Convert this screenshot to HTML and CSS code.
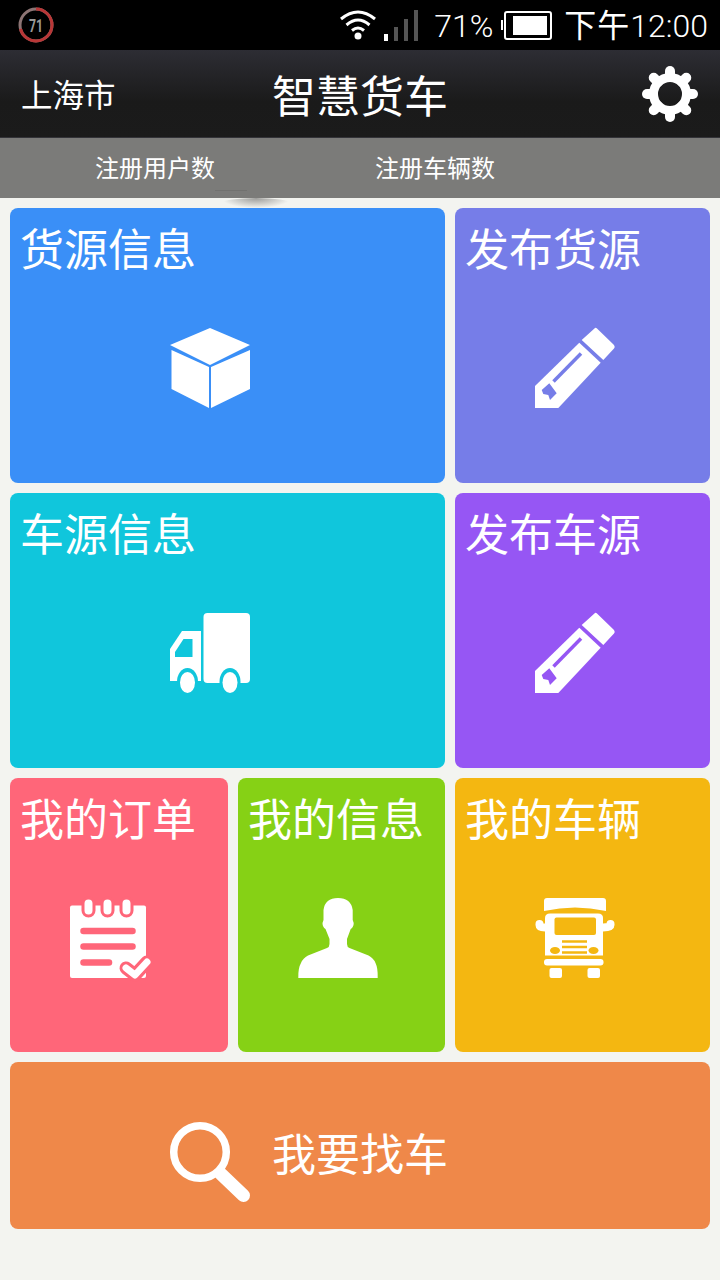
FILE: index.html
```html
<!DOCTYPE html>
<html lang="zh-CN">
<head>
  <meta charset="UTF-8" />
  <meta name="viewport" content="width=device-width, initial-scale=1.0"/>
  <title>智慧货车</title>
  <link rel="stylesheet" href="styles.css">
</head>
<body>

<!-- Status bar -->
<div class="status-bar">
  <svg class="speed-ring" width="36" height="36" viewBox="0 0 36 36">
    <circle cx="18" cy="18" r="16" fill="none" stroke="#8c7474" stroke-width="3"/>
    <circle cx="18" cy="18" r="16" fill="none" stroke="#b93737" stroke-width="3" pathLength="100" stroke-dasharray="71 100" transform="rotate(-90 18 18)"/>
    <text x="18" y="24.500" text-anchor="middle" textLength="14" lengthAdjust="spacingAndGlyphs" class="speed-text">71</text>
  </svg>
  <div class="status-right">
    <svg class="wifi" width="38" height="32" viewBox="0 0 38 32">
      <path d="M2 10 Q19 -4 36 10" fill="none" stroke="#fff" stroke-width="3"/>
      <path d="M7.5 16 Q19 6 30.5 16" fill="none" stroke="#fff" stroke-width="3"/>
      <path d="M13 21.5 Q19 16.5 25 21.5" fill="none" stroke="#fff" stroke-width="3"/>
      <circle cx="19" cy="27" r="3.5" fill="#fff"/>
    </svg>
    <div class="signal">
      <span class="bar bar-1"></span>
      <span class="bar bar-2"></span>
      <span class="bar bar-3"></span>
      <span class="bar bar-4"></span>
    </div>
    <span class="battery-text">71%</span>
    <div class="battery">
      <span class="battery-nub"></span>
      <span class="battery-body"><span class="battery-fill"></span></span>
    </div>
    <span class="clock"><span class="clock-ampm">下午</span>12:00</span>
  </div>
</div>

<!-- Header -->
<div class="app-header">
  <div class="city">上海市</div>
  <div class="app-title">智慧货车</div>
  <div class="settings">
    <svg width="58" height="58" viewBox="0 0 58 58">
      <circle cx="29" cy="29" r="16.5" fill="none" stroke="#fff" stroke-width="9"/>
      <g stroke="#fff" stroke-width="10" stroke-linecap="round">
        <line x1="29" y1="12" x2="29" y2="6"/>
        <line x1="29" y1="12" x2="29" y2="6" transform="rotate(45 29 29)"/>
        <line x1="29" y1="12" x2="29" y2="6" transform="rotate(90 29 29)"/>
        <line x1="29" y1="12" x2="29" y2="6" transform="rotate(135 29 29)"/>
        <line x1="29" y1="12" x2="29" y2="6" transform="rotate(180 29 29)"/>
        <line x1="29" y1="12" x2="29" y2="6" transform="rotate(225 29 29)"/>
        <line x1="29" y1="12" x2="29" y2="6" transform="rotate(270 29 29)"/>
        <line x1="29" y1="12" x2="29" y2="6" transform="rotate(315 29 29)"/>
      </g>
    </svg>
  </div>
</div>

<!-- Counters -->
<div class="summary">
  <span>注册用户数</span>
  <span>注册车辆数</span>
  <i class="marquee-shadow"></i>
</div>

<!-- Menu tiles -->
<div class="menu-grid">
  <div class="tile tile-wide blue">
    <h3>货源信息</h3>
    <svg class="icon icon-wide" viewBox="0 0 80 80">
      <path d="M40 0 L80 17 L40 37 L0 17 Z M1.5 22 L39 39 V80 L1.5 61 Z M41 39 L80 22 V61 L41 80 Z" fill="#fff"/>
    </svg>
  </div>

  <div class="tile periwinkle">
    <h3>发布货源</h3>
    <svg class="icon icon-side" viewBox="0 0 80 80">
      <use href="#pencil"/>
    </svg>
  </div>

  <div class="tile tile-wide cyan">
    <h3>车源信息</h3>
    <svg class="icon icon-wide" viewBox="0 0 80 80">
      <rect x="33.5" y="0" width="46.5" height="70" rx="4" fill="#fff"/>
      <path d="M0 36 L12 18 H31 V68 H0 Z" fill="#fff"/>
      <path d="M13.5 26 H22.5 V44 H5 V39 Z" fill="#10c6dc"/>
      <ellipse cx="17.5" cy="69" rx="10.5" ry="14" fill="#10c6dc"/>
      <ellipse cx="60" cy="69" rx="10.5" ry="14" fill="#10c6dc"/>
      <ellipse cx="17.5" cy="69.5" rx="7.5" ry="10.5" fill="#fff"/>
      <ellipse cx="60" cy="69.5" rx="7.5" ry="10.5" fill="#fff"/>
    </svg>
  </div>

  <div class="tile purple">
    <h3>发布车源</h3>
    <svg class="icon icon-side" viewBox="0 0 80 80">
      <use href="#pencil"/>
    </svg>
  </div>

  <div class="tile pink">
    <h3>我的订单</h3>
    <svg class="icon icon-small" viewBox="0 0 80 80">
      <rect x="0" y="7.500" width="76" height="72.500" rx="2" fill="#fff"/>
      <g fill="#fff" stroke="#ff6679" stroke-width="3">
        <rect x="13" y="0" width="11" height="18" rx="5.500"/>
        <rect x="32" y="0" width="11" height="18" rx="5.500"/>
        <rect x="51" y="0" width="11" height="18" rx="5.500"/>
      </g>
      <g fill="none" stroke="#ff6679" stroke-width="6.500" stroke-linecap="round">
        <path d="M13.500 33 H62.500"/>
        <path d="M13.500 48.500 H62.500"/>
        <path d="M13.500 64.500 H39"/>
      </g>
      <path d="M56 70 L65 77 L77 64" fill="none" stroke="#ff6679" stroke-width="13" stroke-linecap="round" stroke-linejoin="round"/>
      <path d="M56 70 L65 77 L77 64" fill="none" stroke="#fff" stroke-width="7" stroke-linecap="round" stroke-linejoin="round"/>
    </svg>
  </div>

  <div class="tile green">
    <h3>我的信息</h3>
    <svg class="icon icon-small" viewBox="0 0 80 80">
      <path d="M0.300 80 Q0 70 3 65 Q5 60 10 57.500 L29 50 Q31.500 49 31.500 46 V41 L27.500 31 Q24.500 29 24.500 25 L25.500 22 V12 Q27 0 40 0 Q53 0 54.700 12 V22 L55.700 25 Q55.700 29 52.700 31 L49 41 V46 Q49 49 51.500 50 L70.500 57.500 Q75.500 60 77.500 65 Q80 70 79.700 80 Z" fill="#fff"/>
    </svg>
  </div>

  <div class="tile amber">
    <h3>我的车辆</h3>
    <svg class="icon icon-side" viewBox="0 0 80 80">
      <path d="M9 13 V3 Q9 0 12 0 H68 Q71 0 71 3 V13 Q40 6 9 13 Z" fill="#fff"/>
      <path d="M10 20 Q10 15.500 15 15.500 H63 Q68 15.500 68 20 V57.500 H10 Z" fill="#fff"/>
      <rect x="19.500" y="19.500" width="41.500" height="17.500" rx="2" fill="#f4b711"/>
      <g fill="none" stroke="#f4b711" stroke-width="2.500">
        <path d="M27 43.500 H52"/>
        <path d="M27 49 H52"/>
        <path d="M27 54.500 H52"/>
      </g>
      <ellipse cx="20" cy="52.500" rx="5" ry="3.500" fill="#f4b711"/>
      <ellipse cx="58.500" cy="52.500" rx="5" ry="3.500" fill="#f4b711"/>
      <path d="M4.500 26 V27 Q4.500 29.500 10 29.500 M75.500 26 V27 Q75.500 29.500 68 29.500" fill="none" stroke="#fff" stroke-width="8" stroke-linecap="round"/>
      <rect x="9" y="61" width="59.500" height="6.500" rx="3" fill="#fff"/>
      <rect x="14.500" y="70" width="12.500" height="10" rx="2" fill="#fff"/>
      <rect x="52.500" y="70" width="12.500" height="10" rx="2" fill="#fff"/>
    </svg>
  </div>

  <div class="tile tile-search orange">
    <svg class="icon" viewBox="0 0 80 80">
      <circle cx="30" cy="30" r="26.300" fill="none" stroke="#fff" stroke-width="7.500"/>
      <path d="M51 52 L73.500 73.500" fill="none" stroke="#fff" stroke-width="13" stroke-linecap="round"/>
    </svg>
    <h3>我要找车</h3>
  </div>
</div>

<!-- Shared pencil shape, both publish tiles use it -->
<svg class="defs" width="0" height="0">
  <defs>
    <g id="pencil">
      <path d="M46.700 12 L60 0 Q61 -0.500 62 0.500 L79 17 Q80.500 19 79 20.500 L68.300 32 Z" fill="#fff"/>
      <path d="M44.300 14.700 L65.700 34.700 L23.300 80 H0 V58 Z" fill="#fff"/>
      <path d="M46 25.500 L18.500 53.500" fill="none" stroke="currentColor" stroke-width="3.500"/>
      <path d="M6.700 62 L14.300 55.300 L21.700 65.300 L15 72 L13.300 67 L8.300 66 Z" fill="currentColor"/>
    </g>
  </defs>
</svg>

</body>
</html>
```

FILE: styles.css
```css
* {
  box-sizing: border-box;
}

body {
  margin: 0;
  background: #f3f4f0;
  font-family: "Noto Sans CJK SC", "Noto Sans", sans-serif;
  color: #fff;
}

/* status bar */
.status-bar {
  display: flex;
  align-items: center;
  justify-content: space-between;
  height: 50px;
  padding: 0 12px 0 18px;
  background: #000;
}

.speed-text {
  font-family: Roboto, sans-serif;
  font-size: 19px;
  font-weight: 700;
  fill: #999;
}

.status-right {
  display: flex;
  align-items: center;
}

.wifi {
  margin: 0 7px 0 0;
}

.signal {
  display: flex;
  align-items: flex-end;
  gap: 6px;
  height: 31px;
  margin: 0 16px 0 0;
}

.bar {
  width: 4px;
  background: #555;
}

.bar-1 { height: 7px; background: #fff; }
.bar-2 { height: 14px; }
.bar-3 { height: 22px; }
.bar-4 { height: 31px; }

.battery-text {
  width: 67px;
  margin-top: 2px;
  font-family: Roboto, sans-serif;
  font-size: 32px;
  font-weight: 300;
}

.battery {
  display: flex;
  align-items: center;
  margin-right: 12px;
}

.battery-nub {
  width: 2px;
  height: 10px;
  margin-right: 1px;
  background: #fff;
}

.battery-body {
  display: flex;
  width: 48px;
  height: 29px;
  padding: 3px 3px 3px 7px;
  border: 2px solid #fff;
  border-radius: 3px;
}

.battery-fill {
  flex: 1;
  background: #fff;
}

.clock {
  margin-bottom: 5px;
  font-family: Roboto, "Noto Sans CJK SC", sans-serif;
  font-size: 32px;
  font-weight: 300;
  white-space: nowrap;
}

.clock-ampm {
  font-weight: 400;
  letter-spacing: 1px;
}

/* header */
.app-header {
  display: grid;
  grid-template-columns: 1fr auto 1fr;
  align-items: center;
  height: 88px;
  padding: 0 21px 0 21px;
  background: linear-gradient(#2d2d34, #1a1a1a 60%, #1b1b1b);
  border-bottom: 1px solid #333338;
}

.city {
  margin-bottom: 2px;
  font-size: 31.500px;
}

.app-title {
  font-size: 44px;
  line-height: 1;
}

.settings {
  display: flex;
  justify-content: flex-end;
}

/* counters */
.summary {
  position: relative;
  display: flex;
  align-items: center;
  gap: 160px;
  height: 60px;
  padding: 0 0 4px 95px;
  background: #7b7b79;
  font-size: 24px;
}

.summary::after {
  content: "";
  position: absolute;
  left: 215px;
  top: 52px;
  width: 32px;
  height: 1px;
  background: #71716f;
}

.marquee-shadow {
  position: absolute;
  left: 222px;
  top: 60px;
  width: 68px;
  height: 10px;
  border-radius: 50%;
  background: radial-gradient(ellipse at center top, #9a9a98, rgba(160, 160, 158, 0) 72%);
}

/* menu tiles */
.menu-grid {
  display: grid;
  grid-template-columns: 218px 207px 255px;
  grid-template-rows: 275px 275px 274px 167px;
  gap: 10px;
  padding: 10px;
}

.tile {
  padding: 17px 10px 0;
  border-radius: 8px;
}

.tile h3 {
  margin: 0;
  font-size: 44px;
  font-weight: 400;
  line-height: 44px;
}

.tile-wide {
  grid-column: span 2;
}

.tile-search {
  grid-column: span 3;
  display: flex;
  align-items: flex-start;
  padding: 60px 0 0 160px;
}

.tile-search h3 {
  margin: 8px 0 0 22px;
}

.icon {
  display: block;
  width: 80px;
  height: 80px;
  overflow: visible;
}

.tile > .icon-wide,
.tile > .icon-side,
.tile > .icon-small {
  margin-top: 59px;
}

.icon-wide { margin-left: 150px; }
.icon-side { margin-left: 70px; }
.icon-small { margin-left: 50px; }

.defs {
  position: absolute;
}

.blue { background: #3a8ff7; }
.periwinkle { background: #767de8; color: #767de8; }
.cyan { background: #10c6dc; }
.purple { background: #9656f4; color: #9656f4; }
.pink { background: #ff6679; }
.green { background: #86d115; }
.amber { background: #f4b711; }
.orange { background: #ef8849; }

.periwinkle h3,
.purple h3 {
  color: #fff;
}
```
